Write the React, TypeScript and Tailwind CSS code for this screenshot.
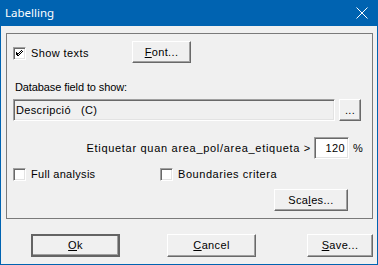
import React from "react";

const font = { fontFamily: '"Liberation Sans", Arial, sans-serif' };

function Btn({ children, w, h = 22, def = false }: { children: React.ReactNode; w: number; h?: number; def?: boolean }) {
  const cls = def
    ? "box-border flex items-center justify-center bg-[#f0f0f0] border-2 border-[#646464] shadow-[inset_-1px_-1px_0_#a0a0a0] text-[11px] text-black tracking-[0.35px]"
    : "box-border flex items-center justify-center bg-[#f0f0f0] border border-t-white border-l-white border-r-[#696969] border-b-[#696969] shadow-[inset_-1px_-1px_0_#a0a0a0] text-[11px] text-black tracking-[0.35px]";
  return (
    <div className={cls} style={{ width: w, height: h }}>
      {children}
    </div>
  );
}

function Check({ checked }: { checked?: boolean }) {
  return (
    <div className="box-border w-[13px] h-[13px] shrink-0 bg-white border border-t-[#a0a0a0] border-l-[#a0a0a0] border-r-white border-b-white shadow-[inset_1px_1px_0_#696969,inset_-1px_-1px_0_#e3e3e3] flex items-center justify-center">
      {checked && (
        <svg width="9" height="9" viewBox="0 0 9 9">
          <path d="M1 4 L3 6 L3 7 M1 5 L3 7 L8 2 M1 3 L3 5 L7 1" stroke="#000" strokeWidth="1.2" fill="none" shapeRendering="crispEdges" />
        </svg>
      )}
    </div>
  );
}

export default function App() {
  return (
    <div className="w-[378px] h-[265px] bg-[#0063b1] flex flex-col overflow-hidden" style={font}>
      <div className="h-[26px] flex items-center justify-between pl-[5px] pr-[10px] text-white">
        <span className="text-[11.5px] leading-none" style={{ fontFamily: '"Noto Sans", "Open Sans", sans-serif' }}>Labelling</span>
        <svg width="12" height="12" viewBox="0 0 12 12">
          <path d="M0.5 0.5 L11.5 11.5 M11.5 0.5 L0.5 11.5" stroke="#fff" strokeWidth="1" />
        </svg>
      </div>
      <div className="mx-[1px] mb-[1px] flex-1 bg-[#f0f0f0] flex flex-col text-[11px] text-black">
        <div className="box-border mt-[7px] ml-[5px] w-[367px] h-[186px] border border-[#7a7a7a] flex flex-col pt-[7px] pl-[6px]">
          <div className="h-[22px] flex items-center">
            <div className="w-[119px] flex items-center gap-[5px] mt-[2px]">
              <Check checked />
              <span className="tracking-[0.4px]">Show texts</span>
            </div>
            <Btn w={59}><span><u>F</u>ont...</span></Btn>
          </div>
          <div className="mt-[18px] h-[13px] leading-[13px] pl-[2px] tracking-[-0.1px]">Database field to show:</div>
          <div className="mt-[5px] h-[22px] flex">
            <div className="box-border w-[322px] h-[22px] bg-[#f0f0f0] border border-t-[#a0a0a0] border-l-[#a0a0a0] border-r-white border-b-white shadow-[inset_1px_1px_0_#696969,inset_-1px_-1px_0_#e3e3e3] flex items-center pl-[2px] whitespace-pre tracking-[0.35px]">
              Descripció   (C)
            </div>
            <div className="ml-[4px]">
              <Btn w={22}><span>...</span></Btn>
            </div>
          </div>
          <div className="mt-[16px] h-[22px] flex items-center justify-end pr-[1px]">
            <span className="tracking-[0.7px]">Etiquetar quan area_pol/area_etiqueta &gt;</span>
            <div className="box-border ml-[3px] w-[35px] h-[22px] bg-white border border-t-[#a0a0a0] border-l-[#a0a0a0] border-r-white border-b-white shadow-[inset_1px_1px_0_#696969,inset_-1px_-1px_0_#e3e3e3] flex items-center justify-end pr-[3px] tracking-[0.4px]">
              120
            </div>
            <span className="w-[22px] pl-[4px]">%</span>
          </div>
          <div className="mt-[7px] h-[16px] flex items-center">
            <div className="w-[147px] flex items-center gap-[5px]">
              <Check />
              <span className="tracking-[0.3px]">Full analysis</span>
            </div>
            <div className="flex items-center gap-[5px]">
              <Check />
              <span className="tracking-[0.55px]">Boundaries critera</span>
            </div>
          </div>
          <div className="mt-[7px] ml-[261px]">
            <Btn w={74}><span>Sca<u>l</u>es...</span></Btn>
          </div>
        </div>
        <div className="mt-[15px] flex pl-[30px]">
          <Btn w={89} h={23} def><span><u>O</u>k</span></Btn>
          <div className="ml-[47px]">
            <Btn w={89} h={23}><span><u>C</u>ancel</span></Btn>
          </div>
          <div className="ml-[51px]">
            <Btn w={66} h={23}><span><u>S</u>ave...</span></Btn>
          </div>
        </div>
      </div>
    </div>
  );
}
